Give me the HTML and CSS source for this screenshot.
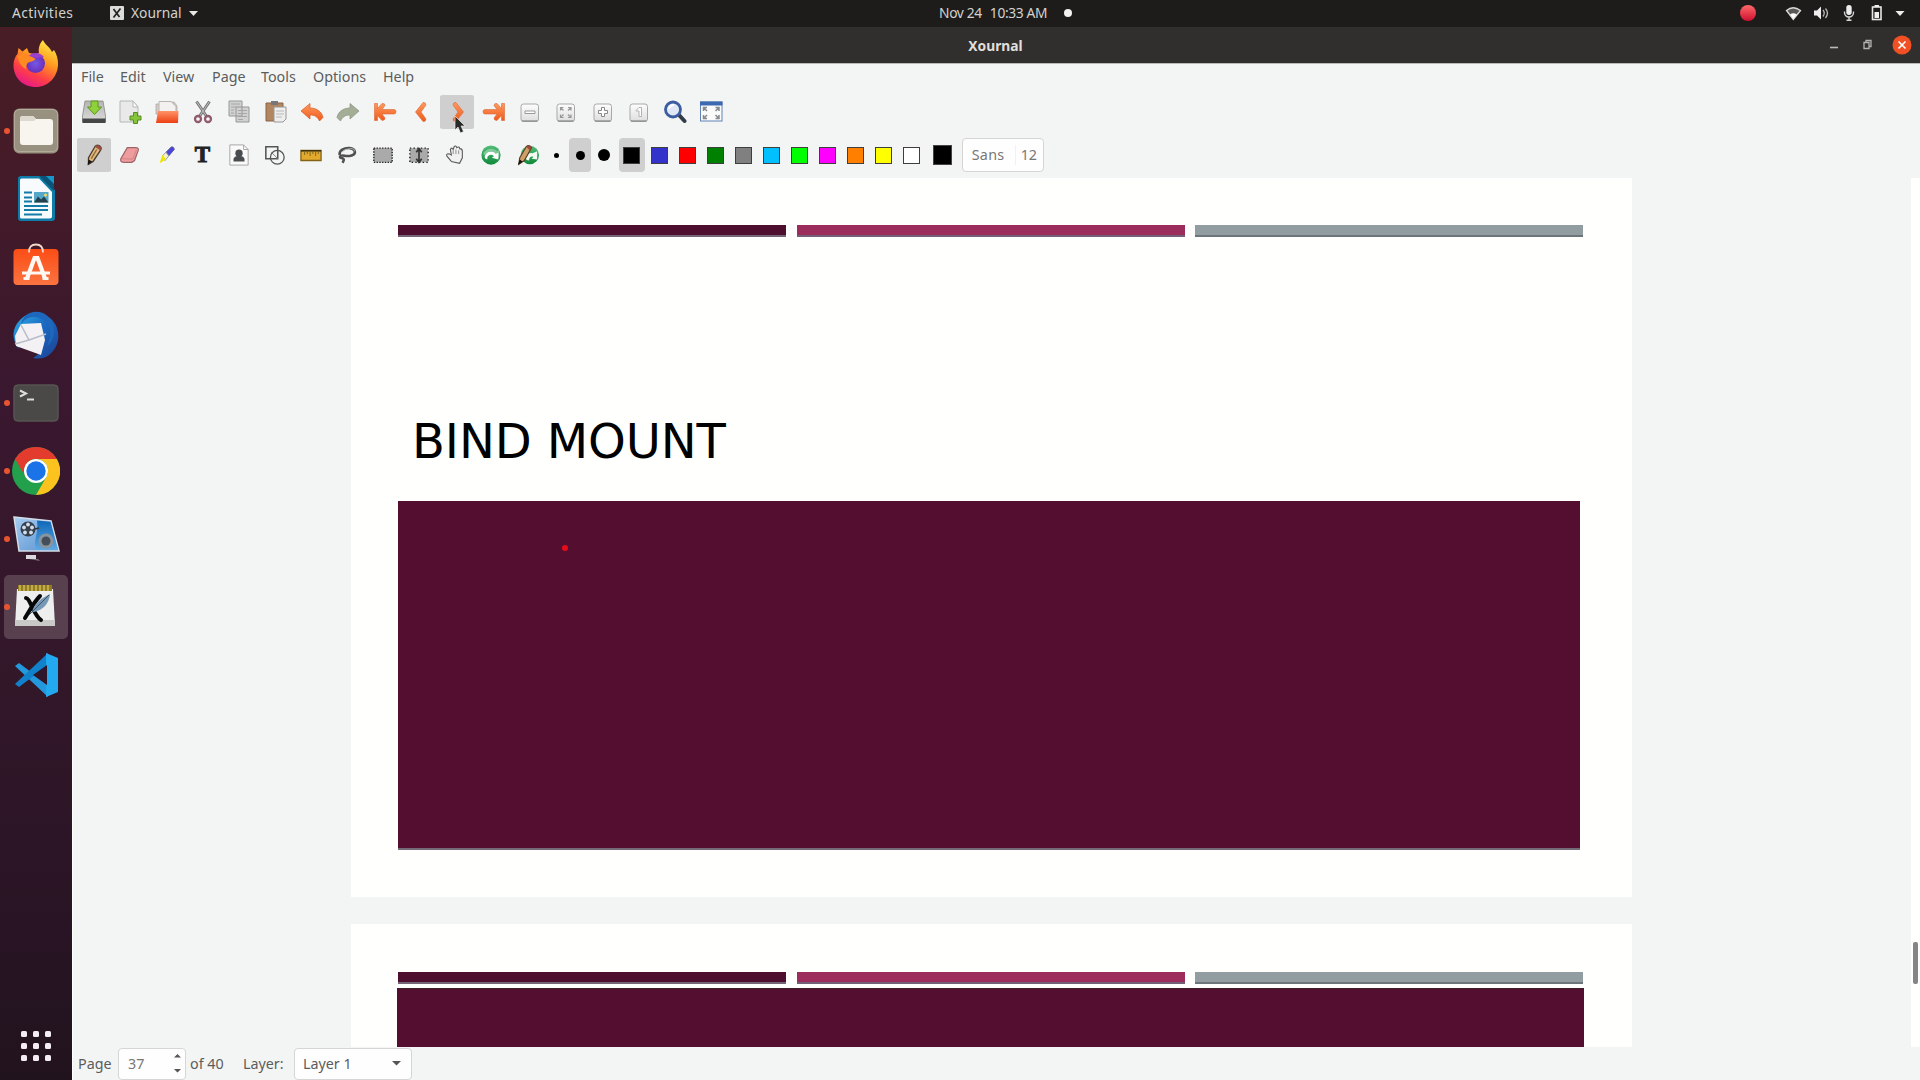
FILE: index.html
```html
<!DOCTYPE html>
<html lang="en">
<head>
<meta charset="utf-8">
<title>Xournal</title>
<link rel="stylesheet" href="styles.css">
</head>
<body>
<svg class="defs" width="0" height="0" aria-hidden="true">
  <defs>
    <linearGradient id="orange" x1="0" y1="0" x2="0" y2="1"><stop offset="0" stop-color="#ff9a5c"/><stop offset="1" stop-color="#ee5a1c"/></linearGradient>
    <linearGradient id="metal" x1="0" y1="0" x2="0" y2="1"><stop offset="0" stop-color="#b5b6b4"/><stop offset="1" stop-color="#dcdddb"/></linearGradient>
    <linearGradient id="folder" x1="0" y1="0" x2="0" y2="1"><stop offset="0" stop-color="#ff9468"/><stop offset="1" stop-color="#ec3f12"/></linearGradient>
    <linearGradient id="green" x1="0" y1="0" x2="0" y2="1"><stop offset="0" stop-color="#52bd78"/><stop offset="1" stop-color="#0f8a3a"/></linearGradient>
    <linearGradient id="key" x1="0" y1="0" x2="0" y2="1"><stop offset="0" stop-color="#fdfdfd"/><stop offset="1" stop-color="#dededd"/></linearGradient>
    <linearGradient id="fox" x1=".8" y1="0" x2=".3" y2="1"><stop offset="0" stop-color="#fff04a"/><stop offset=".4" stop-color="#ff9a1f"/><stop offset=".72" stop-color="#ff3f46"/><stop offset="1" stop-color="#e6178c"/></linearGradient>
    <radialGradient id="globe"><stop offset="0" stop-color="#7558e8"/><stop offset="1" stop-color="#6b2fb8"/></radialGradient>
    <linearGradient id="bird" x1="0" y1="0" x2="1" y2="1"><stop offset="0" stop-color="#2fb0e6"/><stop offset=".45" stop-color="#1b6cc4"/><stop offset="1" stop-color="#1d3f91"/></linearGradient>
    <linearGradient id="screen" x1="0" y1="0" x2="1" y2="1"><stop offset="0" stop-color="#a8cdf0"/><stop offset=".5" stop-color="#7eaee0"/><stop offset="1" stop-color="#5a92d0"/></linearGradient>
    <linearGradient id="screen2" x1="0" y1="0" x2="0" y2="1"><stop offset="0" stop-color="#0e68b8"/><stop offset="1" stop-color="#5fa8e2"/></linearGradient>
    <linearGradient id="bag" x1="0" y1="0" x2="0" y2="1"><stop offset="0" stop-color="#fb4d16"/><stop offset="1" stop-color="#fb7440"/></linearGradient>
    <linearGradient id="rec" x1="0" y1="0" x2="0" y2="1"><stop offset="0" stop-color="#ff6a6a"/><stop offset="1" stop-color="#cf0f2f"/></linearGradient>
  </defs>
</svg>

<header class="topbar">
  <span class="activities">Activities</span>
  <span class="appmenu">
    <svg width="14" height="14" viewBox="0 0 14 14"><rect width="14" height="14" rx="1" fill="#dcdcda"/><path d="M3.500 3l6 8M10.500 2.500l-7 9" stroke="#222" stroke-width="1.700"/></svg>
    <span class="appname">Xournal</span>
    <svg width="9" height="5" viewBox="0 0 9 5"><path d="M0 0h9L4.500 5z" fill="#e8e8e6"/></svg>
  </span>
  <span class="clock"><span>Nov 24</span><span>10:33 AM</span><i class="notice"></i></span>
  <span class="tray">
    <svg width="186" height="27" viewBox="-10 0 186 27">
      <circle cx="4" cy="13" r="8" fill="url(#rec)"/>
      <path d="M42.500 10.500Q49 5 56.500 10.500L49.300 19.500z" fill="#595856" stroke="#dcdbd9" stroke-width="1.300"/>
      <path d="M46 14.500q3.400-2.500 6.800 0L49.300 19z" fill="#fff"/>
      <path d="M70 10.500h3l4-4v13l-4-4h-3z" fill="#eee"/><path d="M79 10q2.500 3 0 6.500M81.500 8.500q4 4.500 0 9.500" fill="none" stroke="#bbb" stroke-width="1.300"/>
      <rect x="102.300" y="5" width="5.400" height="10" rx="2.700" fill="#eee"/><path d="M100.500 11.500v1a4.500 4.500 0 009 0v-1M105 17v3M102.500 20.300h5" fill="none" stroke="#d5d5d3" stroke-width="1.400"/>
      <rect x="128.500" y="7" width="8.500" height="12.500" fill="none" stroke="#e6e6e4" stroke-width="1.600"/><path d="M130.500 5h4.500v2h-4.500zM130.500 12h4.500v6h-4.500z" fill="#eee"/>
      <path d="M151.500 11h9l-4.500 5z" fill="#eee"/>
    </svg>
  </span>
</header>

<div class="desktop">
  <nav class="dock">
    <div class="app"><svg viewBox="0 0 48 48"><path d="M24 48C10 48 1.500 38 1.500 26c0-5 2-9 4-11l1-6 4 3.500L15 9l2 5 6 1 4-1c-1-5 1-10 4-13 2 5 7 7 9 12l2-2c3 5 4 9 4 14 0 13-10 23-22 23z" fill="url(#fox)"/><circle cx="23.500" cy="24.500" r="9.500" fill="url(#globe)"/><path d="M5.500 17c5-3 11-3 15 1l3 2c-2 3-5 2-8 4-1 2-2 4-1 6-4-1-8-6-9-13z" fill="#ff8a22"/><path d="M17 17c3-4 11-4 15 1l-8 1z" fill="#9a3fd0"/></svg></div>
    <div class="app"><i class="run"></i><svg viewBox="0 0 48 48"><rect x="1.500" y="1.500" width="45" height="45" rx="6" fill="#98917f"/><rect x="2.500" y="2.500" width="43" height="42" rx="5" fill="none" stroke="#b2ab9a"/><path d="M8 12q0-3 3-3h10l3 3h14q3 0 3 3v20q0 3-3 3H11q-3 0-3-3z" fill="#f8f5ef"/><path d="M8 12q0-3 3-3h10l3 3-2 2H8z" fill="#ded9cf"/></svg></div>
    <div class="app"><svg viewBox="0 0 48 48"><path d="M9 1h20l14 14v28q0 3-3 3H9q-3 0-3-3V4q0-3 3-3z" fill="#0e7ba8"/><path d="M9.500 3.500H27L40 17v24q0 2.500-2.500 2.500h-28Q8 43.500 8 42V5q0-1.500 1.500-1.500z" fill="#f7fbfd"/><path d="M27 1h14q1 0 1 1v14z" fill="#0a5577"/><path d="M34 1h8v8z" fill="#1697c9"/><path d="M12 17.500h8M12 22.500h8M12 26.500h8M12 31h24M12 35h24M12 39.500h18" stroke="#127ba5" stroke-width="2"/><rect x="22" y="17" width="14.500" height="10.500" fill="#55a8ca"/><path d="M22 27.500l4-6 3 3 3-3 4.500 6z" fill="#24404a"/><circle cx="33.500" cy="20" r="1.500" fill="#f4d95b"/></svg></div>
    <div class="app"><svg viewBox="0 0 48 48"><rect x="1.500" y="6" width="45" height="36" rx="4" fill="url(#bag)"/><path d="M17 9.500q0-8 7-8t7 8" fill="none" stroke="#f0d7c8" stroke-width="1.800"/><path d="M15 35.500L22.500 15h3L33 35.500" fill="none" stroke="#fff8f3" stroke-width="4.200"/><path d="M10 30h28M11.500 35.500h6M30.500 35.500h6" stroke="#fff8f3" stroke-width="3.200"/></svg></div>
    <div class="app"><svg viewBox="0 0 48 48"><path d="M8 9C16 0 32-1 41 10c9 11 6 27-4 34-5 4-11 4-16 3 7-4 10-10 10-16 0-10-13-15-21-6-4 5-4 10-3 13-8-10-7-21 1-29z" fill="url(#bird)"/><path d="M9 13l20-1 4 17-4 15-25-9-1-10z" fill="#f3f1f3"/><path d="M9 14l8 15 17-6M17 29L3 33" fill="none" stroke="#b9bdc9" stroke-width="1.500"/><path d="M9 14C13 5 25 4 31 9c8 6 9 16 4 26 11-8 8-27-4-33C21-2 10 3 9 14z" fill="#1d68bd"/></svg></div>
    <div class="app"><i class="run"></i><svg viewBox="0 0 48 48"><rect x="1.500" y="5.500" width="45" height="37" rx="4" fill="#4b4947"/><rect x="2" y="6" width="44" height="36" rx="4" fill="none" stroke="#5c5a58"/><path d="M8 11.500l6 3-6 3M15 20.500h7" fill="none" stroke="#dddcd9" stroke-width="2"/></svg></div>
    <div class="app"><i class="run"></i><svg viewBox="0 0 48 48"><circle cx="24" cy="24" r="24" fill="#22a04b"/><path d="M3.200 12A24 24 0 0144.800 12H24a12 12 0 00-10.400 18z" fill="#e33b2e"/><path d="M44.800 12A24 24 0 0124 48l10.400-18A12 12 0 0024 12z" fill="#fcc31e"/><circle cx="24" cy="24" r="12" fill="#fff"/><circle cx="24" cy="24" r="9.700" fill="#1b73e8"/></svg></div>
    <div class="app"><i class="run"></i><svg viewBox="0 0 48 48"><path d="M2 2l37 4 8 30H7z" fill="url(#screen)" stroke="#d4dce8" stroke-width="1.500"/><path d="M25 5.500l13.500 1.200L46 35H25c-5-9 2-15 0-29.500z" fill="url(#screen2)"/><circle cx="16" cy="14" r="7.500" fill="#333f4d"/><g fill="#d5dee8"><circle cx="16" cy="9.500" r="1.900"/><circle cx="20" cy="12.500" r="1.900"/><circle cx="19" cy="17.500" r="1.900"/><circle cx="13" cy="17.500" r="1.900"/><circle cx="12" cy="12.500" r="1.900"/></g><path d="M23 14l4-1" stroke="#333" stroke-width="1.800"/><circle cx="34" cy="26" r="7.500" fill="#8a949f"/><circle cx="34" cy="26" r="4.500" fill="#444e5a"/><path d="M14 40h10v4H14z" fill="#dbd9dd"/><path d="M17 44h9l2 2z" fill="#77717a"/></svg></div>
    <div class="app active"><i class="run"></i><svg viewBox="0 0 48 48"><path d="M5 6h36l2 37H3z" fill="#eee"/><path d="M3 37h40v6H3z" fill="#c9c9c7"/><path d="M6 2h34v6H6z" fill="#927c25"/><path d="M8 2v6M12 2v6M16 2v6M20 2v6M24 2v6M28 2v6M32 2v6M36 2v6" stroke="#d8c157" stroke-width="1.400"/><path d="M14 15c4 0 8 18 15 22M28 13C22 19 18 27 13 35" fill="none" stroke="#080808" stroke-width="4" stroke-linecap="round"/><path d="M20 29c2-9 10-14 18-18-1 10-7 16-16 18z" fill="#7798b4"/><path d="M17 32L37 12" stroke="#34556f"/></svg></div>
    <div class="app"><svg viewBox="0 0 48 48"><path d="M3 15l4-3 29 22v12z" fill="#2398dd"/><path d="M3 33l4 3L36 14V2z" fill="#1081ca"/><path d="M34 2l12 5v34l-12 5z" fill="#23a9ef"/><path d="M35 14v20L21 24z" fill="#30162a"/></svg></div>
    <div class="launcher"><i></i><i></i><i></i><i></i><i></i><i></i><i></i><i></i><i></i></div>
  </nav>

  <main class="window">
    <div class="titlebar"><span>Xournal</span>
      <svg class="winbuttons" width="90" height="36" viewBox="0 0 90 36"><path d="M4 20.500h8" stroke="#bbb" stroke-width="1.600"/><path d="M38 15.500h5v6h-5zM40 15v-1.500h5v6h-1.500" fill="none" stroke="#b3b2b0" stroke-width="1.300"/><circle cx="76" cy="18" r="9.500" fill="#f05023"/><path d="M72.500 14.500l7 7m0-7l-7 7" stroke="#fff" stroke-width="1.700"/></svg>
    </div>
    <nav class="menubar"><span>File</span><span>Edit</span><span>View</span><span>Page</span><span>Tools</span><span>Options</span><span>Help</span></nav>

    <div class="toolbar files">
      <b><svg viewBox="0 0 24 24"><path d="M3 1h18l2.500 15v6H.5v-6z" fill="url(#metal)" stroke="#858684" stroke-width=".8"/><path d="M.5 18.500h23V23H.5z" fill="#444746"/><path d="M9 1h7v6h3.500l-7 7.500-7-7.500H9z" fill="#8fd13a" stroke="#5d981b"/></svg></b>
      <b><svg viewBox="0 0 24 24"><path d="M2 1h13l5 6v15H2z" fill="#e8e9e8" stroke="#b5b6b5"/><path d="M15 1v6h5z" fill="#fff" stroke="#b5b6b5"/><path d="M15.500 12.500h4v3.500h3.500v4h-3.500v3.500h-4V20H12v-4h3.500z" fill="#85c53b" stroke="#588d1e"/></svg></b>
      <b><svg viewBox="0 0 24 24"><path d="M1 4h4l2-2h12l3 4v8H1z" fill="#d5cbc6" stroke="#a99f99" stroke-width=".7"/><path d="M7 1.500h9l5 5V12H4V1.500z" fill="#f2f1ef" stroke="#b8b5b1"/><path d="M3 11h20.500L23 23H1z" fill="url(#folder)"/></svg></b>
      <b><svg viewBox="0 0 24 24"><path d="M5.500 1.500L16 17M18.500 1.500L8 17" stroke="#777" stroke-width="3"/><path d="M5.500 1.500L16 17M18.500 1.500L8 17" stroke="#c0c0be"/><circle cx="7" cy="19" r="3" fill="none" stroke="#925b6d" stroke-width="2.300"/><circle cx="17" cy="19" r="3" fill="none" stroke="#925b6d" stroke-width="2.300"/></svg></b>
      <b><svg viewBox="0 0 24 24"><path d="M2 1h13v15H2zM9 7h13v15H9z" fill="#d0d1d0" stroke="#969796"/><path d="M4 4h9M4 7h5M4 10h3M4 13h3M11 10.500h9M11 13.500h9M11 16.500h9M11 19.500h5" stroke="#a5a6a5"/></svg></b>
      <b><svg viewBox="0 0 24 24"><path d="M2 3h17v18H2z" fill="#b38662" stroke="#8b6243"/><path d="M7 1h7v4H7z" fill="#777"/><path d="M10 7h12v12l-3 3h-9z" fill="#eee" stroke="#989796"/><path d="M12 11h8M12 14h8M12 17h6" stroke="#b8b8b7"/></svg></b>
      <b><svg viewBox="0 0 24 24"><path d="M1 11l9-7.500V8c7 0 12 4 13 9.500L19.500 21c-2-4-4.500-6-9.500-6v4z" fill="url(#orange)" stroke="#d75a2a" stroke-width=".7"/></svg></b>
      <b><svg viewBox="0 0 24 24"><path d="M23 11l-9-7.500V8C7 8 2 12 1 17.500L4.500 21c2-4 4.500-6 9.500-6v4z" fill="#a4ad95" stroke="#88917a" stroke-width=".7"/></svg></b>
      <b><svg viewBox="0 0 24 24"><path d="M1.500 3.500h3v5l4.500-5q3-.5 3 2L9 9.500h12q2 0 2 2.200T21 14H9l3 4q0 2.500-3 2.500l-4.500-5v5h-3z" fill="url(#orange)" stroke="#d9683d" stroke-width=".6"/></svg></b>
      <b><svg viewBox="0 0 24 24"><path d="M14 2.500q3-.5 3 2.500l-5 7 5 7q0 3-3 2.500L6.500 12z" fill="url(#orange)" stroke="#d9683d" stroke-width=".6"/></svg></b>
      <b class="on"><svg viewBox="0 0 24 24"><path d="M11 2.500q-3-.5-3 2.500l5 7-5 7q0 3 3 2.500L18.500 12z" fill="url(#orange)" stroke="#d9683d" stroke-width=".6"/></svg><svg class="pointer" viewBox="0 0 12 18"><path d="M1 0v14l3-3 2.500 6 3-1.500L7 10h4z" fill="#292929" stroke="#eee" stroke-width=".7"/></svg></b>
      <b><svg viewBox="0 0 24 24"><path d="M22.500 3.500h-3v5l-4.500-5q-3-.5-3 2l3 4H3q-2 0-2 2.200T3 14h12l-3 4q0 2.500 3 2.500l4.500-5v5h3z" fill="url(#orange)" stroke="#d9683d" stroke-width=".6"/></svg></b>
      <b><svg viewBox="0 0 24 24"><rect x="3" y="4" width="17.500" height="17.500" rx="2.500" fill="url(#key)" stroke="#a7a8a7"/><path d="M4 21h15.500" stroke="#8b8c8b" stroke-width="1.300"/><path d="M7 11h10v2.500H7z" fill="#fff" stroke="#999"/></svg></b>
      <b><svg viewBox="0 0 24 24"><rect x="3" y="4" width="17.500" height="17.500" rx="2.500" fill="url(#key)" stroke="#a7a8a7"/><path d="M4 21h15.500" stroke="#8b8c8b" stroke-width="1.300"/><path d="M6.500 10.500V7.500h3m4.500 0h3v3m0 4v3h-3m-4.500 0h-3v-3M7 8l2.500 2.500m7-2.500L14 10.500m2.500 6.500L14 14.500M7 17l2.500-2.500" fill="none" stroke="#999" stroke-width="1.200"/></svg></b>
      <b><svg viewBox="0 0 24 24"><rect x="3" y="4" width="17.500" height="17.500" rx="2.500" fill="url(#key)" stroke="#a7a8a7"/><path d="M4 21h15.500" stroke="#8b8c8b" stroke-width="1.300"/><path d="M10.500 7.500h3v3h3v3h-3v3h-3v-3h-3v-3h3z" fill="#fff" stroke="#888"/></svg></b>
      <b><svg viewBox="0 0 24 24"><rect x="3" y="4" width="17.500" height="17.500" rx="2.500" fill="url(#key)" stroke="#a7a8a7"/><path d="M4 21h15.500" stroke="#8b8c8b" stroke-width="1.300"/><path d="M9 10.500l3-3h2.500v9h-2.500v-5.500H9z" fill="#fff" stroke="#b2b2b2"/></svg></b>
      <b><svg viewBox="0 0 24 24"><path d="M16 15l5.500 6" stroke="#343b48" stroke-width="4" stroke-linecap="round"/><circle cx="10" cy="9.500" r="7.500" fill="#dfe8f4" stroke="#3b5da0" stroke-width="2.800"/><path d="M6 9q1-4 5-4" fill="none" stroke="#fff" stroke-width="2"/></svg></b>
      <b><svg viewBox="0 0 24 24"><rect x="1.500" y="2" width="21.500" height="19" fill="#fafafa" stroke="#6282b5"/><path d="M1 1.500h22.500v4H1z" fill="#3c69b0"/><path d="M4.500 11V7.500H8M16.500 7.500H20V11M20 15v3.500h-3.500M8 18.500H4.500V15M5 8l3 3M19.500 8l-3 3M19.500 18l-3-3M5 18l3-3" fill="none" stroke="#85898e" stroke-width="1.500"/></svg></b>
    </div>

    <div class="toolbar pens">
      <b class="on"><svg viewBox="0 0 24 24"><path d="M6 15L13 3q2-3 5-1t1 5l-8 12-5 3z" fill="#e5b978" stroke="#4b3c31" stroke-width="1.500"/><path d="M13 3q2-3 5-1t1 5z" fill="#9b4f44"/><path d="M6 17l4 2-5 4z" fill="#151515"/><path d="M9 16l6-10" stroke="#876846" stroke-width="1.500"/></svg></b>
      <b><svg viewBox="0 0 24 24"><path d="M9 4h9q4 0 3 3l-4 11-3 2H5q-4 0-3-4z" fill="#ef9c9e" stroke="#9b6466" stroke-width="1.300"/><path d="M3 16l12 .5 4-10" fill="none" stroke="#cf8084"/></svg></b>
      <b><svg viewBox="0 0 24 24"><path d="M12 9l6-6q3 0 3 3l-6 7z" fill="#4944df" stroke="#5a5a8b"/><path d="M8 13l4-4 3 4-4 5z" fill="#f3f3c8" stroke="#9292a5"/><path d="M8 12l4 5-7 4z" fill="#ede400"/></svg></b>
      <b><span class="letter">T</span></b>
      <b><svg viewBox="0 0 24 24"><path d="M2 1h15l5 5v17H2z" fill="#fafafa" stroke="#a1a2a1"/><path d="M17 1v5h5" fill="none" stroke="#a1a2a1"/><circle cx="12" cy="10" r="4" fill="#4a4d50"/><path d="M6 19v-3q1-3 4-3h4q3 0 4 3v3z" fill="#4a4d50"/></svg></b>
      <b><svg viewBox="0 0 24 24"><path d="M2 3h13v13H2z" fill="none" stroke="#555" stroke-width="1.700"/><circle cx="14.500" cy="14.500" r="7.500" fill="none" stroke="#555" stroke-width="1.400"/><path d="M8 9l7 7" stroke="#777"/></svg></b>
      <b><svg viewBox="0 0 24 24"><path d="M1 7h22v11H1z" fill="#e2aa2c" stroke="#846319" stroke-width="1.400"/><path d="M1 7.500h22" stroke="#392e15" stroke-width="1.600"/><path d="M5 8v4M8 8v3M11 8v5M14 8v3M17 8v5M20 8v3" stroke="#8a6c26" stroke-width="1.200"/></svg></b>
      <b><svg viewBox="0 0 24 24"><path d="M4 12C3 7 9 4 15 4.500s8 6 2 8-9-1-12 .5q-2 2 2 2.500 3 1 0 5" fill="none" stroke="#505050" stroke-width="2.800"/><path d="M6 9q4-4 10-4 5 0 4 3" fill="none" stroke="#bbb"/></svg></b>
      <b><svg viewBox="0 0 24 24"><path d="M2 4.500h20V20H2z" fill="#aaa" stroke="#222" stroke-width="1.500" stroke-dasharray="1.500 1.500"/></svg></b>
      <b><svg viewBox="0 0 24 24"><path d="M2 4.500h20V20H2z" fill="#aaa" stroke="#222" stroke-width="1.500" stroke-dasharray="1.500 2.500"/><path d="M12 5v15M9 9l3-4 3 4M9 16l3 4 3-4" fill="none" stroke="#333" stroke-width="1.800"/></svg></b>
      <b><svg viewBox="0 0 24 24"><path d="M8 19l-5-6q-1-3 3-2l2 1-1-6q1-3 3 0l1-3q2-2 3 1 3-2 3 1 3 0 3 3v7l-3 6z" fill="#f1f1f0" stroke="#5b5b5b" stroke-width="1.200"/><path d="M10 7v4M13 6v5M16 7v4" stroke="#888"/></svg></b>
      <b><svg viewBox="0 0 24 24"><circle cx="12" cy="12" r="10.500" fill="url(#green)"/><path d="M4 9q8-7 15-1l2-2v9h-8l3-4Q10 7 4 13z" fill="#fff" opacity=".35"/><path d="M5 14.500Q6 8.500 12 8.500q4 0 5 2.500l3-1.500v7.500l-7-2 2.500-1.500q-1.500-2.500-5-1.500-3 1-2.500 5-3-1-3-2.500z" fill="#fff"/></svg></b>
      <b><svg viewBox="0 0 24 24"><circle cx="14" cy="12" r="10" fill="url(#green)"/><path d="M9 15q2-6 8-5l5-2v9l-6-1 2-2q-4-2-5 4-3 0-4-3z" fill="#f2faf3"/><path d="M3 15L10 3q3-3 6 1L8 18l-6 4z" fill="#cfa066" stroke="#5a4027" stroke-width="1.300"/><path d="M10 3q3-3 6 1l-2 3z" fill="#a04a3e"/><path d="M3 17l3 2-5 4z" fill="#111"/></svg></b>
      <u class="dot"><i style="width:5px;height:5px"></i></u>
      <u class="dot on"><i style="width:9px;height:9px"></i></u>
      <u class="dot"><i style="width:12px;height:12px"></i></u>
      <u class="color on"><i style="background:#000"></i></u>
      <u class="color"><i style="background:#3333cc"></i></u>
      <u class="color"><i style="background:#ff0000"></i></u>
      <u class="color"><i style="background:#008000"></i></u>
      <u class="color"><i style="background:#808080"></i></u>
      <u class="color"><i style="background:#00c0ff"></i></u>
      <u class="color"><i style="background:#00ff00"></i></u>
      <u class="color"><i style="background:#ff00ff"></i></u>
      <u class="color"><i style="background:#ff8000"></i></u>
      <u class="color"><i style="background:#ffff00"></i></u>
      <u class="color"><i style="background:#ffffff"></i></u>
      <u class="current"></u>
      <span class="fontbutton"><span>Sans</span><span>12</span></span>
    </div>

    <section class="canvas">
      <div class="pages">
        <article class="sheet">
          <div class="bars"><i></i><i></i><i></i></div>
          <h1>BIND MOUNT</h1>
          <div class="panel"><i class="ink"></i></div>
        </article>
        <article class="sheet next">
          <div class="bars"><i></i><i></i><i></i></div>
          <div class="panel"></div>
        </article>
      </div>
      <div class="scroll"><i></i></div>
    </section>

    <footer class="status">
      <span class="label">Page</span>
      <span class="spin"><span>37</span><svg width="9" height="21" viewBox="0 0 9 21"><path d="M1 4.500h7L4.500 1zM1 16h7l-3.500 3.500z" fill="#555"/></svg></span>
      <span class="total">of 40</span>
      <span class="layer">Layer:</span>
      <span class="combo"><span>Layer 1</span><svg width="9" height="5" viewBox="0 0 9 5"><path d="M0 0h9L4.500 4.500z" fill="#555"/></svg></span>
    </footer>
  </main>
</div>
</body>
</html>
```
FILE: styles.css
```css
* { box-sizing: border-box; }
body {
  margin: 0; width: 1920px; height: 1080px; overflow: hidden;
  display: flex; flex-direction: column;
  font: 14.3px/20px "Noto Sans", "Open Sans", sans-serif; color: #5c5c5b;
  background: #f3f5f5;
}
.defs { position: absolute; }
svg { display: block; flex: none; }

.topbar {
  flex: none; height: 27px; background: #1d1c1b; color: #d3d2cf;
  display: grid; grid-template-columns: 110px 829px 795px 186px; align-items: center;
  font-size: 13.8px; line-height: 18px;
}
.activities { padding: 0 0 1px 12px; letter-spacing: .38px; }
.appmenu { display: flex; align-items: center; gap: 7px; padding-bottom: 1px; }
.appname { width: 51px; }
.clock { display: flex; align-items: center; gap: 8px; white-space: nowrap; letter-spacing: -.35px; padding-bottom: 1px; }
.notice { width: 8px; height: 8px; border-radius: 50%; background: #f3f2f0; margin-left: 9px; }

.desktop { flex: 1; min-height: 0; display: flex; }
.dock {
  width: 72px; flex: none; display: flex; flex-direction: column; padding-top: 1.5px;
  background: linear-gradient(#491d25 0, #421a29 18%, #3a182f 34%, #321729 62%, #281424 86%, #21131d 100%);
}
.app { height: 68.1px; flex: none; display: grid; place-items: center; position: relative; }
.app svg { width: 48px; height: 48px; }
.app.active::before {
  content: ""; position: absolute; inset: 2px 4px; border-radius: 5px; background: #58404f;
}
.app.active svg { position: relative; }
.run { position: absolute; left: 4px; top: 31px; width: 6px; height: 6px; border-radius: 50%; background: #e95430; z-index: 1; }
.launcher { margin: auto auto 19px; display: grid; grid-template-columns: repeat(3, 6px); gap: 6px; }
.launcher i { height: 6px; border-radius: 1.5px; background: #f6edf4; }

.window { flex: 1; min-width: 0; display: flex; flex-direction: column; border-left: 1px solid #fff; }
.titlebar {
  height: 37px; flex: none; background: #302f2d; border-bottom: 1px solid #b9b9b7;
  display: grid; grid-template-columns: 1fr auto 1fr; align-items: center;
  font-weight: 700; color: #e0dfdc; font-size: 13.8px; margin-left: -1px;
}
.titlebar span { grid-column: 2; padding: 1px 1px 0 0; }
.winbuttons { justify-self: end; margin-right: 4px; }

.menubar {
  height: 27px; flex: none; padding: 0 0 1px 8px;
  display: grid; grid-template-columns: 39px 43px 49px 49px 52px 70px 60px; align-items: center;
}
.toolbar { display: flex; flex: none; padding-left: 3px; align-items: center; }
.toolbar b { width: 36.32px; flex: none; display: grid; place-items: center; position: relative; }
.toolbar b svg { width: 24px; height: 24px; }
.files { height: 41px; }
.files b, .pens b { height: 34px; }
.pens { height: 46px; }
.pens b { width: 36.14px; }
.pens b svg { width: 22px; height: 22px; }
.toolbar .on { background: linear-gradient(#cfcfcf, #cfcfcf) center / 34px 34px no-repeat; border-radius: 4px; }
.files .pointer.pointer { position: absolute; left: 15px; top: 21px; width: 12px; height: 18px; z-index: 2; }
.letter { font: 700 23px/24px "Liberation Serif", serif; color: #222; -webkit-text-stroke: 1px #222; }
.toolbar u { flex: none; height: 34px; display: grid; place-items: center; }
.dot { width: 22px; margin-right: 1.7px; border-radius: 4px; }
.dot i { border-radius: 50%; background: #000; }
.color { width: 26px; margin: 0 1px; border-radius: 4px; }
.color i { width: 17px; height: 17px; border: 1.5px solid #3e3e3e; }
.color:nth-of-type(4) { margin-left: 2px; }
.current { width: 19px; height: 20px !important; background: #000; border: 1px solid #444; margin-left: 7px; }
.fontbutton {
  width: 82px; height: 34px; margin-left: 10px; border: 1px solid #d4d5d4; border-radius: 4px; background: #fefefe;
  display: grid; grid-template-columns: 52px 1fr; align-items: center; color: #777;
}
.fontbutton span { padding-left: 9px; letter-spacing: .3px; }
.fontbutton span + span { padding-left: 5px; letter-spacing: 0; border-left: 1px solid #f3f1f0; }

.canvas { flex: 1; min-height: 0; display: flex; justify-content: space-between; overflow: hidden; }
.pages { margin-left: 278px; width: 1281px; }
.sheet { height: 719px; background: #fffffe; padding: 47px 48px 0 47px; margin-bottom: 27px; }
.bars { display: grid; grid-template-columns: repeat(3, 388px); gap: 10.5px; }
.bars i { height: 12px; background: #4e0e2e; border-bottom: 2px solid #756475; }
.bars i:nth-child(2) { background: #9c2c5c; border-color: #705f76; }
.bars i:nth-child(3) { background: #929da1; border-color: #6c7579; }
h1 { margin: 176px 0 0 14px; font: 48px/56px "DejaVu Sans", sans-serif; letter-spacing: -.1px; color: #000; }
.panel { width: 1182px; height: 349px; margin-top: 32px; background: #530e30; border-bottom: 2px solid #746b79; position: relative; }
.ink { position: absolute; left: 164px; top: 44px; width: 6px; height: 6px; border-radius: 50%; background: #e80c18; }
.next { padding-top: 48px; }
.next .panel { width: 1187px; margin: 4px 0 0 -1px; border-top: 1px solid #3f1b2b; }
.scroll { width: 9px; background: #fffffe; padding: 764px 0 0 2px; }
.scroll i { display: block; width: 5px; height: 42px; border-radius: 2px; background: #858585; }

.status { height: 33px; flex: none; display: flex; align-items: center; padding-left: 5px; }
.label { width: 40px; }
.spin, .combo {
  height: 32px; border: 1px solid #d5d6d5; border-radius: 4px; background: #fefefe;
  display: flex; align-items: center; justify-content: space-between;
}
.spin { width: 68px; padding: 0 3px 0 9px; color: #777; }
.total { width: 57px; padding-left: 4px; white-space: nowrap; }
.layer { width: 51px; }
.combo { width: 118px; padding: 0 10px 0 8px; }
```
